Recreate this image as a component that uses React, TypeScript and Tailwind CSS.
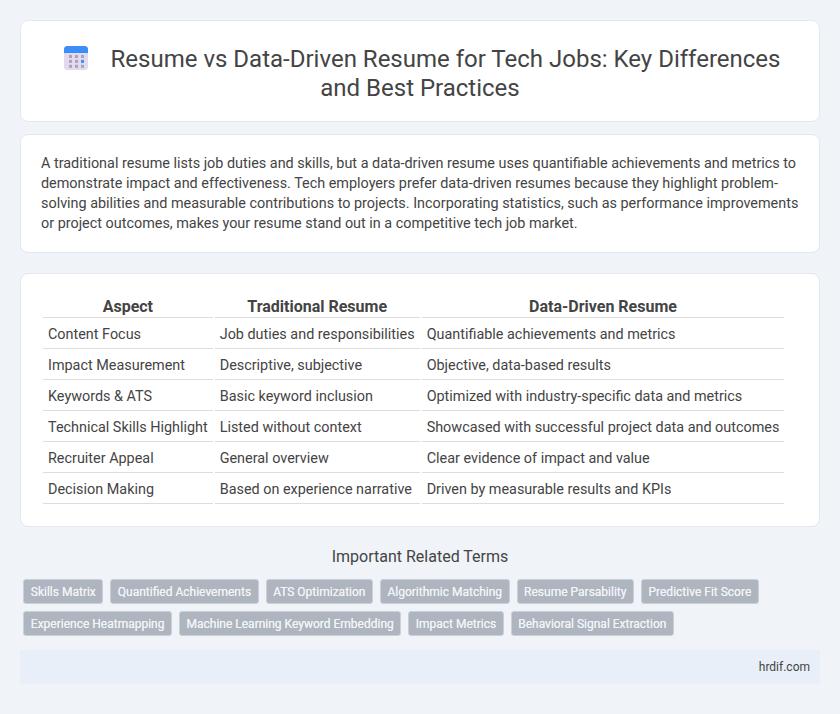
const rows = [
  ["Content Focus", "Job duties and responsibilities", "Quantifiable achievements and metrics"],
  ["Impact Measurement", "Descriptive, subjective", "Objective, data-based results"],
  ["Keywords & ATS", "Basic keyword inclusion", "Optimized with industry-specific data and metrics"],
  ["Technical Skills Highlight", "Listed without context", "Showcased with successful project data and outcomes"],
  ["Recruiter Appeal", "General overview", "Clear evidence of impact and value"],
  ["Decision Making", "Based on experience narrative", "Driven by measurable results and KPIs"],
];
const row1 = ["Skills Matrix", "Quantified Achievements", "ATS Optimization", "Algorithmic Matching", "Resume Parsability", "Predictive Fit Score"];
const row2 = ["Experience Heatmapping", "Machine Learning Keyword Embedding", "Impact Metrics", "Behavioral Signal Extraction"];

function CalendarIcon() {
  return (
    <svg width="24" height="24" viewBox="0 0 24 24" className="mr-[23px] ml-[4px] inline-block align-[-3px]">
      <rect x="0" y="0" width="24" height="24" rx="3.5" fill="#e3daf0" />
      <path d="M0 7V3.5A3.5 3.5 0 0 1 3.5 0h17A3.5 3.5 0 0 1 24 3.5V7Z" fill="#3a8ef8" />
      {[0, 1, 2].map((r) =>
        [0, 1, 2].map((c) => (
          <rect key={`${r}-${c}`} x={5 + c * 6} y={9 + r * 4.9} width="3" height="3" fill={r === 1 && c === 2 ? "#3a8ef8" : "#aba4b8"} />
        ))
      )}
    </svg>
  );
}

export default function App() {
  return (
    <div className="min-h-[714px] bg-[#f0f4f9] p-5 font-['Roboto',sans-serif] text-[#444444]">
      <div className="flex flex-col gap-3">
        <header className="rounded-lg border border-[#e2e8f0] bg-white px-[20px] pt-[24px] pb-[18px]">
          <h1 className="text-center text-2xl leading-[29px] font-normal text-[#444444]">
            <CalendarIcon />
            Resume vs Data-Driven Resume for Tech Jobs: Key Differences and Best Practices
          </h1>
        </header>
        <section className="rounded-lg border border-[#e2e8f0] bg-white px-[20px] pt-[19px] pb-[17px]">
          <p className="text-[14.4px] leading-[20.16px]">
            A traditional resume lists job duties and skills, but a data-driven resume uses quantifiable achievements and metrics to demonstrate impact and effectiveness. Tech employers prefer data-driven resumes because they highlight problem-solving abilities and measurable contributions to projects. Incorporating statistics, such as performance improvements or project outcomes, makes your resume stand out in a competitive tech job market.
          </p>
        </section>
        <section className="mt-[8px] rounded-lg border border-[#e2e8f0] bg-white px-[20px] pt-[17px] pb-[20px]">
          <table className="border-separate border-spacing-[2px] text-[14.4px]">
            <thead>
              <tr>
                {["Aspect", "Traditional Resume", "Data-Driven Resume"].map((h) => (
                  <th key={h} className="border-b border-[#dddddd] px-[5px] pt-[4px] pb-[1px] text-center text-base leading-[19px] font-bold">{h}</th>
                ))}
              </tr>
            </thead>
            <tbody>
              {rows.map((r) => (
                <tr key={r[0]}>
                  {r.map((c) => (
                    <td key={c} className="border-b border-[#dddddd] px-[5px] pt-[7px] pb-[5px] leading-[16px] whitespace-nowrap">{c}</td>
                  ))}
                </tr>
              ))}
            </tbody>
          </table>
        </section>
      </div>
      <h2 className="mt-[20px] text-center text-base leading-[19px] font-normal">Important Related Terms</h2>
      <div className="mt-[13px] flex flex-col gap-[7px] px-[3.33px]">
        {[row1, row2].map((row, i) => (
          <div key={i} className="flex gap-[7px]">
            {row.map((t) => (
              <span key={t} className="rounded-[3px] border border-[#cbd0d8] bg-[#afb5bf] px-[6.5px] pt-[5px] pb-[3px] text-xs leading-[15px] font-normal text-[#f0f4f9] [text-shadow:0_0_0.6px_#f0f4f9]">{t}</span>
            ))}
          </div>
        ))}
      </div>
      <footer className="mt-[14px] flex h-[34px] items-center justify-end bg-[#e8eff8] px-[10px] text-xs">hrdif.com</footer>
    </div>
  );
}
